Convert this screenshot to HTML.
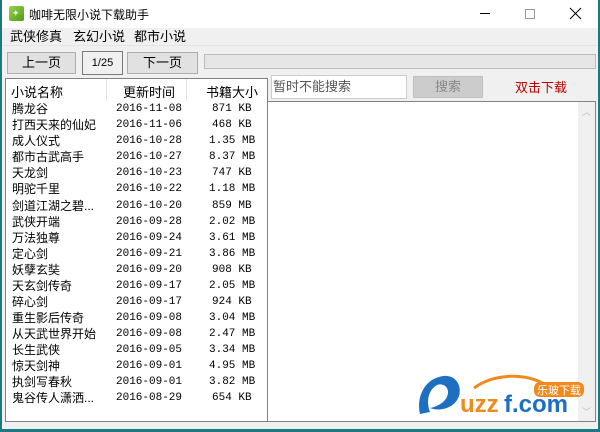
<!DOCTYPE html>
<html><head><meta charset="utf-8"><style>
*{margin:0;padding:0;box-sizing:border-box}
body{width:600px;height:432px;overflow:hidden;background:#1a7a80;font-family:"Liberation Sans","Noto Sans CJK SC",sans-serif;font-size:12px;color:#000;position:relative}
.win{position:absolute;left:2px;top:0;width:596px;height:429px;background:#f0f0f0}
.title{position:absolute;left:0;top:0;width:596px;height:28px;background:#fff}
.abs{position:absolute}
.btn{position:absolute;background:#e1e1e1;border:1px solid #adadad;text-align:center;font-size:13px}
.row{position:absolute;left:0;height:16px;line-height:16px;font-size:12px;white-space:nowrap}
.mono{font-family:"Liberation Mono","DejaVu Sans Mono",monospace;font-size:11px}
</style></head><body>
<div class="win">
<div class="title">
 <div class="abs" style="left:7px;top:6px;width:15px;height:15px;background:linear-gradient(135deg,#9bd44a,#4c9a1a);border-radius:2px"></div>
 <div class="abs" style="left:10px;top:9px;color:#fff;font-size:9px;line-height:9px">✦</div>
 <div class="abs" style="left:27px;top:6px;font-size:12px">咖啡无限小说下载助手</div>
 <svg class="abs" style="left:470px;top:6px" width="120" height="16">
  <line x1="8" y1="7.5" x2="18" y2="7.5" stroke="#000" stroke-width="1"/>
  <rect x="53.5" y="3.5" width="9" height="9" fill="none" stroke="#999"/>
  <line x1="98" y1="2" x2="109" y2="13" stroke="#000"/>
  <line x1="109" y1="2" x2="98" y2="13" stroke="#000"/>
 </svg>
</div>
<div class="abs" style="left:8px;top:28px;font-size:13px;line-height:17px">武侠修真</div>
<div class="abs" style="left:71px;top:28px;font-size:13px;line-height:17px">玄幻小说</div>
<div class="abs" style="left:132px;top:28px;font-size:13px;line-height:17px">都市小说</div>
<div class="abs" style="left:0;top:45px;width:596px;height:1px;background:#e4e4e4"></div>
<div class="btn" style="left:5px;top:52px;width:69px;height:22px;line-height:20px">上一页</div>
<div class="abs" style="left:80px;top:51px;width:41px;height:24px;border:1px solid #7a7a7a;background:#f0f0f0;text-align:center;line-height:22px;font-size:11px">1/25</div>
<div class="btn" style="left:125px;top:52px;width:71px;height:22px;line-height:20px">下一页</div>
<div class="abs" style="left:202px;top:54px;width:392px;height:15px;border:1px solid #bcbcbc;background:#e6e6e6"></div>
<div class="abs" style="left:3px;top:78px;width:263px;height:344px;border:1px solid #828282;background:#fff">
 <div class="abs" style="left:100px;top:0;width:1px;height:22px;background:#e5e5e5"></div>
 <div class="abs" style="left:180px;top:0;width:1px;height:22px;background:#e5e5e5"></div>
 <div class="abs" style="left:5px;top:3px;font-size:13px">小说名称</div>
 <div class="abs" style="left:117px;top:3px;font-size:13px">更新时间</div>
 <div class="abs" style="left:200px;top:3px;font-size:13px">书籍大小</div>
 <div class="abs" style="left:0;top:22px;width:261px">
 <div class="row" style="top:0"><span class="abs" style="left:6px">腾龙谷</span><span class="abs mono" style="left:110px">2016-11-08</span><span class="abs mono" style="left:206px">871 KB</span></div>
 <div class="row" style="top:16px"><span class="abs" style="left:6px">打西天来的仙妃</span><span class="abs mono" style="left:110px">2016-11-06</span><span class="abs mono" style="left:206px">468 KB</span></div>
 <div class="row" style="top:32px"><span class="abs" style="left:6px">成人仪式</span><span class="abs mono" style="left:110px">2016-10-28</span><span class="abs mono" style="left:203px">1.35 MB</span></div>
 <div class="row" style="top:48px"><span class="abs" style="left:6px">都市古武高手</span><span class="abs mono" style="left:110px">2016-10-27</span><span class="abs mono" style="left:203px">8.37 MB</span></div>
 <div class="row" style="top:64px"><span class="abs" style="left:6px">天龙剑</span><span class="abs mono" style="left:110px">2016-10-23</span><span class="abs mono" style="left:206px">747 KB</span></div>
 <div class="row" style="top:80px"><span class="abs" style="left:6px">明驼千里</span><span class="abs mono" style="left:110px">2016-10-22</span><span class="abs mono" style="left:203px">1.18 MB</span></div>
 <div class="row" style="top:97px"><span class="abs" style="left:6px">剑道江湖之碧...</span><span class="abs mono" style="left:110px">2016-10-20</span><span class="abs mono" style="left:206px">859 MB</span></div>
 <div class="row" style="top:113px"><span class="abs" style="left:6px">武侠开端</span><span class="abs mono" style="left:110px">2016-09-28</span><span class="abs mono" style="left:203px">2.02 MB</span></div>
 <div class="row" style="top:129px"><span class="abs" style="left:6px">万法独尊</span><span class="abs mono" style="left:110px">2016-09-24</span><span class="abs mono" style="left:203px">3.61 MB</span></div>
 <div class="row" style="top:145px"><span class="abs" style="left:6px">定心剑</span><span class="abs mono" style="left:110px">2016-09-21</span><span class="abs mono" style="left:203px">3.86 MB</span></div>
 <div class="row" style="top:161px"><span class="abs" style="left:6px">妖孽玄奘</span><span class="abs mono" style="left:110px">2016-09-20</span><span class="abs mono" style="left:206px">908 KB</span></div>
 <div class="row" style="top:177px"><span class="abs" style="left:6px">天玄剑传奇</span><span class="abs mono" style="left:110px">2016-09-17</span><span class="abs mono" style="left:203px">2.05 MB</span></div>
 <div class="row" style="top:193px"><span class="abs" style="left:6px">碎心剑</span><span class="abs mono" style="left:110px">2016-09-17</span><span class="abs mono" style="left:206px">924 KB</span></div>
 <div class="row" style="top:209px"><span class="abs" style="left:6px">重生影后传奇</span><span class="abs mono" style="left:110px">2016-09-08</span><span class="abs mono" style="left:203px">3.04 MB</span></div>
 <div class="row" style="top:225px"><span class="abs" style="left:6px">从天武世界开始</span><span class="abs mono" style="left:110px">2016-09-08</span><span class="abs mono" style="left:203px">2.47 MB</span></div>
 <div class="row" style="top:241px"><span class="abs" style="left:6px">长生武侠</span><span class="abs mono" style="left:110px">2016-09-05</span><span class="abs mono" style="left:203px">3.34 MB</span></div>
 <div class="row" style="top:257px"><span class="abs" style="left:6px">惊天剑神</span><span class="abs mono" style="left:110px">2016-09-01</span><span class="abs mono" style="left:203px">4.95 MB</span></div>
 <div class="row" style="top:273px"><span class="abs" style="left:6px">执剑写春秋</span><span class="abs mono" style="left:110px">2016-09-01</span><span class="abs mono" style="left:203px">3.82 MB</span></div>
 <div class="row" style="top:289px"><span class="abs" style="left:6px">鬼谷传人潇洒...</span><span class="abs mono" style="left:110px">2016-08-29</span><span class="abs mono" style="left:206px">654 KB</span></div>
 </div>
</div>
<div class="abs" style="left:269px;top:75px;width:136px;height:24px;border:1px solid #ccc;background:#fff;color:#555;font-size:13px;line-height:22px;padding-left:1px">暂时不能搜索</div>
<div class="abs" style="left:411px;top:76px;width:70px;height:22px;border:1px solid #bfbfbf;background:#cccccc;color:#888;font-size:13px;text-align:center;line-height:20px">搜索</div>
<div class="abs" style="left:513px;top:77px;color:#c00000;font-size:13px">双击下载</div>
<div class="abs" style="left:265px;top:101px;width:329px;height:321px;border:1px solid #828282;background:#fff">
 <div class="abs" style="left:310px;top:0;width:17px;height:319px;background:#f0f0f0"></div>
 <div class="abs" style="left:314px;top:3px;color:#bbb;font-size:9px">︿</div>
 <div class="abs" style="left:314px;top:303px;color:#bbb;font-size:9px">﹀</div>
 <div class="abs" style="left:148px;top:268px;width:170px;height:46px">
  <svg width="170" height="46" viewBox="0 0 170 46">
   <path d="M4 44 C0 28 8 8 28 6 C40 5 46 16 43 26 C39 38 24 42 14 38 C24 36 32 30 32 22 C32 16 26 13 21 15 C12 20 10 32 14 42 Z" fill="#1d6fc2"/>
   <path d="M58 18 C80 2 112 4 128 14" stroke="#f08a1c" stroke-width="3" fill="none"/>
   <text x="44" y="42" font-family="Liberation Sans" font-weight="bold" font-size="24" fill="#f08a1c">uzz</text>
   <text x="88" y="42" font-family="Liberation Sans" font-weight="bold" font-size="24" fill="#1d6fc2">f.com</text>
   <rect x="118" y="12" width="50" height="15" rx="6" fill="#f08a1c"/>
   <text x="121" y="24" font-family="Noto Sans CJK SC" font-size="11" fill="#fff">乐玻下载</text>
  </svg>
 </div>
</div>
</div>
</body></html>
